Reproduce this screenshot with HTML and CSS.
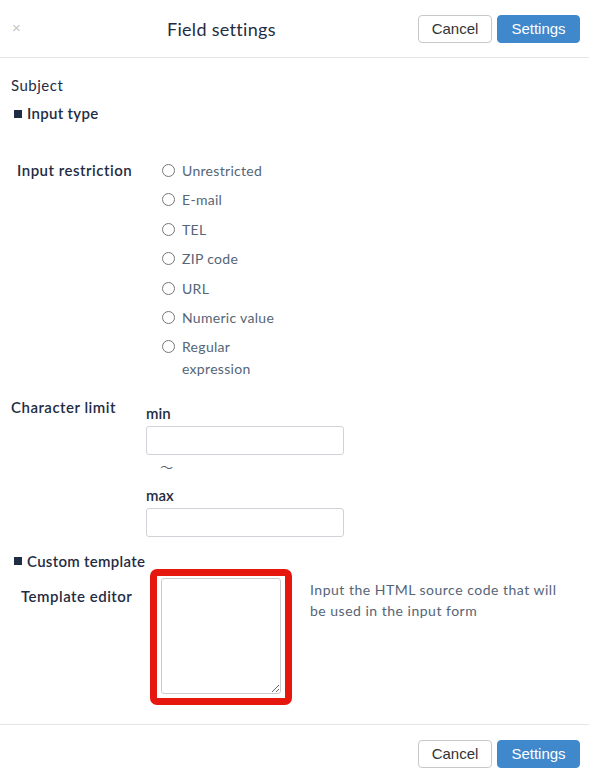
FILE: index.html
```html
<!DOCTYPE html>
<html lang="en">
<head>
  <meta charset="UTF-8">
  <title>Field settings</title>
  <link rel="stylesheet" href="styles.css">
</head>
<body>
  <div class="modal">
    <div class="modal-header">
      <span class="close">&times;</span>
      <div class="title">Field settings</div>
      <div class="actions">
        <button class="btn btn-default">Cancel</button>
        <button class="btn btn-primary">Settings</button>
      </div>
    </div>

    <div class="modal-body">
      <div class="subject">Subject</div>
      <div class="section-title"><span class="square"></span>Input type</div>

      <div class="row restriction">
        <div class="row-label">Input restriction</div>
        <ul class="radio-list">
          <li><span class="radio"></span><span>Unrestricted</span></li>
          <li><span class="radio"></span><span>E-mail</span></li>
          <li><span class="radio"></span><span>TEL</span></li>
          <li><span class="radio"></span><span>ZIP code</span></li>
          <li><span class="radio"></span><span>URL</span></li>
          <li><span class="radio"></span><span>Numeric value</span></li>
          <li><span class="radio"></span><span>Regular<br>expression</span></li>
        </ul>
      </div>

      <div class="row limit">
        <div class="row-label">Character limit</div>
        <div class="limit-fields">
          <div class="field-name">min</div>
          <input type="text" class="text-input">
          <div class="tilde">〜</div>
          <div class="field-name">max</div>
          <input type="text" class="text-input">
        </div>
      </div>

      <div class="section-title custom"><span class="square"></span>Custom template</div>

      <div class="row template">
        <div class="row-label">Template editor</div>
        <div class="highlight">
          <textarea class="editor"></textarea>
        </div>
        <p class="help">Input the HTML source code that will be used in the input form</p>
      </div>
    </div>

    <div class="modal-footer">
      <button class="btn btn-default">Cancel</button>
      <button class="btn btn-primary">Settings</button>
    </div>
  </div>
</body>
</html>
```

FILE: styles.css
```css
:root {
  --text: #1f2d44;
  --muted: #556577;
  --line: #e3e5e8;
  --primary: #3f88cc;
}

body {
  margin: 0;
  background: #fff;
  font-family: 'Lato', 'Liberation Sans', sans-serif;
  font-size: 14px;
  color: var(--text);
}

.modal {
  width: 589px;
  height: 783px;
  display: flex;
  flex-direction: column;
}

.modal-header {
  height: 58px;
  box-sizing: border-box;
  border-bottom: 1px solid var(--line);
  display: flex;
  align-items: center;
  padding: 0 9px 0 12px;
}

.close {
  color: #c4c4c4;
  font-family: 'Liberation Sans', sans-serif;
  font-size: 15px;
  width: 150px;
  margin-top: -2px;
}

.title {
  flex: 1;
  font-size: 18px;
  letter-spacing: 0.3px;
  padding-left: 5px;
}

.actions {
  display: flex;
  gap: 5px;
}

.btn {
  font-family: 'Liberation Sans', sans-serif;
  font-size: 15px;
  height: 28px;
  padding: 0 12px;
  border-radius: 4px;
  cursor: pointer;
}

.btn-default {
  background: #fff;
  border: 1px solid #c8c8c8;
  color: #333;
  width: 74px;
}

.btn-primary {
  background: var(--primary);
  border: 1px solid var(--primary);
  color: #fff;
  width: 83px;
}

.modal-body {
  flex: 1;
  padding: 17px 11px 0;
}

.subject {
  font-size: 15px;
  letter-spacing: 0.5px;
  line-height: 20px;
}

.section-title {
  display: flex;
  align-items: center;
  margin-top: 8px;
  line-height: 20px;
  font-weight: 600;
  font-size: 15px;
  letter-spacing: 0.3px;
}

.square {
  width: 8px;
  height: 8px;
  background: var(--text);
  margin: 1px 5px 0 3px;
}

.row {
  display: flex;
}

.row-label {
  font-weight: 600;
  font-size: 15px;
  letter-spacing: 0.5px;
  flex-shrink: 0;
}

.restriction {
  margin-top: 37px;
}

.restriction .row-label {
  width: 145px;
  padding-left: 6px;
  line-height: 20px;
}

.radio-list {
  list-style: none;
  margin: 0;
  padding: 0;
  color: var(--muted);
}

.radio-list li {
  display: flex;
  align-items: flex-start;
  gap: 7px;
  line-height: 22px;
  margin-bottom: 7.4px;
  letter-spacing: 0.3px;
}

.radio {
  width: 11px;
  height: 11px;
  border: 1px solid #777;
  border-radius: 50%;
  margin-top: 4px;
  flex-shrink: 0;
}

.limit {
  margin-top: 9px;
}

.limit .row-label {
  width: 135px;
  line-height: 20px;
}

.limit-fields {
  padding-top: 9px;
}

.field-name {
  font-weight: 600;
  font-size: 15px;
  line-height: 14px;
  margin-bottom: 6px;
}

.text-input {
  display: block;
  box-sizing: border-box;
  width: 198px;
  height: 29px;
  border: 1px solid #cfd3d7;
  border-radius: 3px;
}

.tilde {
  font-family: 'Noto Sans CJK JP', sans-serif;
  font-size: 13px;
  color: var(--muted);
  padding-left: 14px;
  line-height: 24px;
  margin-bottom: 9px;
}

.custom {
  margin-top: 14px;
}

.template {
  margin-top: -2px;
}

.template .row-label {
  width: 129px;
  padding-left: 10px;
  padding-top: 17px;
  line-height: 20px;
}

.highlight {
  width: 142px;
  height: 136px;
  box-sizing: border-box;
  border: 7px solid #e6170f;
  border-radius: 7px;
  padding: 2px 4px;
}

.editor {
  display: block;
  box-sizing: border-box;
  width: 120px;
  height: 116px;
  border: 1px solid #c8ccd0;
  border-radius: 3px;
  resize: both;
  margin: 0;
}

.help {
  margin: 10px 0 0 18px;
  width: 256px;
  line-height: 21px;
  letter-spacing: 0.5px;
  color: var(--muted);
}

.modal-footer {
  height: 58px;
  box-sizing: border-box;
  border-top: 1px solid var(--line);
  display: flex;
  justify-content: flex-end;
  align-items: center;
  gap: 5px;
  padding: 0 9px;
  margin-bottom: 1px;
}
```
